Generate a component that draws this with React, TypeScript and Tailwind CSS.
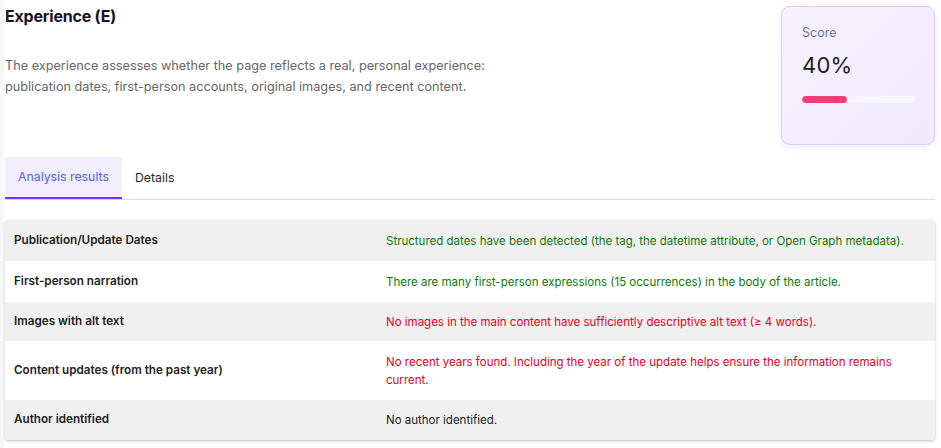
import React from "react";

type Row = { label: string; value: string; tone: "ok" | "bad" | "neutral" };

const rows: Row[] = [
  {
    label: "Publication/Update Dates",
    value:
      "Structured dates have been detected (the tag, the datetime attribute, or Open Graph metadata).",
    tone: "ok",
  },
  {
    label: "First-person narration",
    value:
      "There are many first-person expressions (15 occurrences) in the body of the article.",
    tone: "ok",
  },
  {
    label: "Images with alt text",
    value:
      "No images in the main content have sufficiently descriptive alt text (≥ 4 words).",
    tone: "bad",
  },
  {
    label: "Content updates (from the past year)",
    value:
      "No recent years found. Including the year of the update helps ensure the information remains current.",
    tone: "bad",
  },
  { label: "Author identified", value: "No author identified.", tone: "neutral" },
];

const toneClass: Record<Row["tone"], string> = {
  ok: "text-[#0b7a0b]",
  bad: "text-[#e8001c]",
  neutral: "text-[#222222]",
};

const rowHeight = ["h-[41px]", "h-[41px]", "h-[39px]", "h-[59px]", "h-[40px]"];

export default function App() {
  const score = 40;
  return (
    <div
      className="w-[941px] h-[448px] bg-white overflow-hidden flex"
      style={{ fontFamily: "Inter, 'Noto Sans', sans-serif" }}
    >
      <div className="w-[4px] shrink-0 bg-[#f7f7f7]" />
      <div className="flex-1 pl-[1px] pr-[6px]">
        <div className="flex justify-between">
          <div className="pt-[5px]">
            <h1 className="text-[16px] leading-[22px] font-bold text-[#1a1028] tracking-[-0.2px]">
              Experience (E)
            </h1>
            <p className="mt-[28px] text-[12.7px] leading-[21px] text-[#666666]">
              The experience assesses whether the page reflects a real, personal experience:
              <br />
              publication dates, first-person accounts, original images, and recent content.
            </p>
          </div>
          <div className="mt-[6px] w-[154px] h-[139px] rounded-[9px] border border-[#dccbfa] bg-gradient-to-br from-[#f7f1fe] to-[#f1eafd] shadow-[0_2px_8px_rgba(0,0,0,0.08)] px-[20px] pt-[18px]">
            <div className="text-[12.5px] leading-[16px] text-[#7078a8]">Score</div>
            <div className="mt-[10px] text-[22px] leading-[28px] text-[#222] tracking-[0.2px]">
              {score}%
            </div>
            <div className="mt-[17px] h-[7px] w-[113px] rounded-full bg-[#f7f5ff] overflow-hidden">
              <div
                className="h-full rounded-full bg-[#f43f76]"
                style={{ width: `${score}%` }}
              />
            </div>
          </div>
        </div>

        <div className="mt-[12px] flex border-b border-[#ddd5f3]">
          <div className="h-[42px] px-[13px] flex items-center bg-[#f3eefd] border-b-2 border-[#7b2ff0] -mb-[1px] text-[12.3px] text-[#4f5ff5]">
            Analysis results
          </div>
          <div className="h-[42px] px-[13px] flex items-center text-[12.3px] text-[#2a2a2a]">
            Details
          </div>
        </div>

        <div className="mt-[20px] rounded-[4px] overflow-hidden shadow-[0_1px_3px_rgba(0,0,0,0.25)]">
          {rows.map((r, i) => (
            <div
              key={r.label}
              className={`grid grid-cols-[381px_1fr] items-center ${
                i % 2 === 0 ? "bg-[#f0f0f0]" : "bg-white"
              } ${rowHeight[i]}`}
            >
              <div className="pl-[9px] text-[11.7px] font-semibold text-[#222]">{r.label}</div>
              <div className={`pr-[30px] text-[11.5px] leading-[18px] ${toneClass[r.tone]}`}>
                {r.value}
              </div>
            </div>
          ))}
        </div>
      </div>
    </div>
  );
}
